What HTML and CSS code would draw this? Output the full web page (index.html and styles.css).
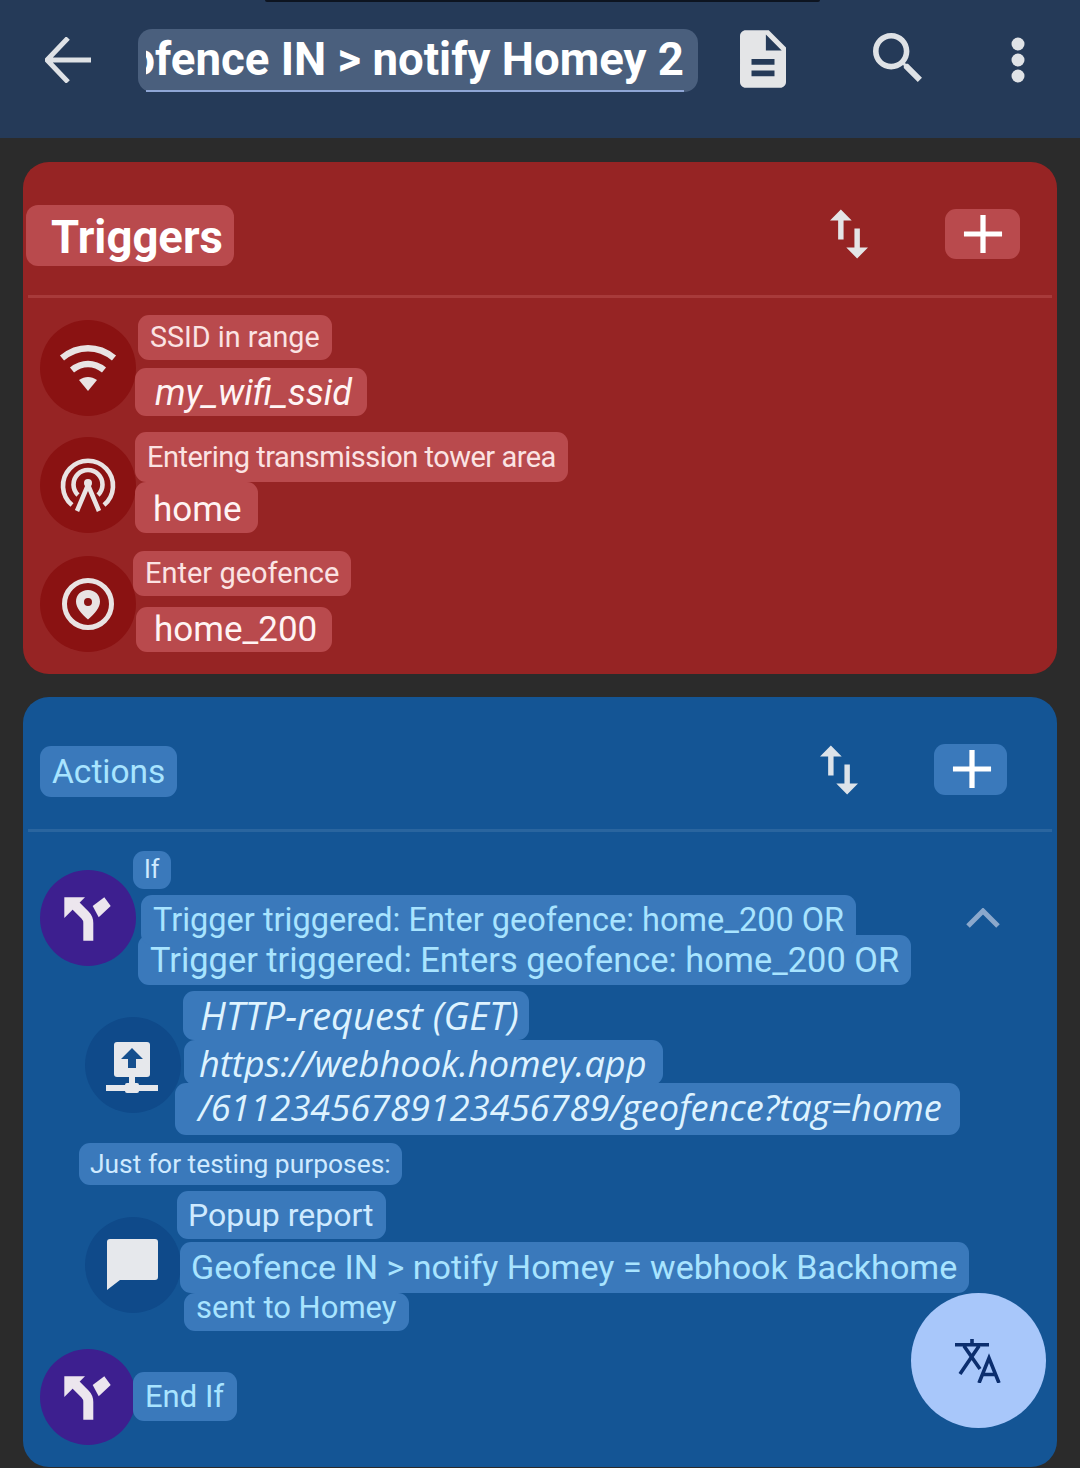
FILE: index.html
```html
<!DOCTYPE html>
<html lang="en">
<head>
<meta charset="utf-8">
<title>Geofence IN > notify Homey 2</title>
<link rel="stylesheet" href="styles.css">
</head>
<body>
<div class="notch"></div>
<header class="topbar">
  <svg class="back" viewBox="0 0 46 46"><path d="M23 1 2 23l21 22M2 23h44" fill="none" stroke="#dfe2e6" stroke-width="5"/></svg>
  <div class="title-chip"><div class="title-clip"><span class="title-text">Geofence IN &gt; notify Homey 2</span></div></div>
  <svg class="ico-doc" viewBox="4 2 16 20"><path fill="#e4e5e7" d="M14 2H6c-1.1 0-1.99.9-1.99 2L4 20c0 1.1.89 2 1.99 2H18c1.1 0 2-.9 2-2V8l-6-6zm2 16H8v-2h8v2zm0-4H8v-2h8v2zm-3-5V3.5L18.5 9H13z"/></svg>
  <svg class="ico-search" viewBox="3 3 17.5 17.5"><path fill="#dfe2e6" d="M15.5 14h-.79l-.28-.27C15.41 12.59 16 11.11 16 9.5 16 5.91 13.09 3 9.5 3S3 5.91 3 9.5 5.91 16 9.5 16c1.61 0 3.09-.59 4.23-1.57l.27.28v.79l5 4.99L20.49 19l-4.99-5zm-6 0C7.01 14 5 11.99 5 9.5S7.01 5 9.5 5 14 7.01 14 9.5 11.99 14 9.5 14z"/></svg>
  <svg class="ico-more" viewBox="0 0 14 46"><circle cx="7" cy="7" r="6.5" fill="#dfe2e6"/><circle cx="7" cy="23" r="6.5" fill="#dfe2e6"/><circle cx="7" cy="39" r="6.5" fill="#dfe2e6"/></svg>
</header>

<main class="content">
  <section class="card card-red">
    <div class="card-head head-red">
      <div class="chip chip-triggers">Triggers</div>
      <svg class="ico-swap" viewBox="5 3 14 18"><path fill="#e4e5e7" d="M16 17.01V10h-2v7.01h-3L15 21l4-3.99h-3zM9 3L5 6.99h3V14h2V6.99h3L9 3z"/></svg>
      <div class="add-btn"><svg viewBox="0 0 42 42"><path d="M21 1v40M1 21h40" stroke="#fff" stroke-width="5.5"/></svg></div>
    </div>
    <div class="divider"></div>
    <div class="rows rows-red">
      <div class="row">
        <div class="circle"><svg viewBox="0 0 96 96"><path d="M22 38c16-13 36-13 52 0" fill="none" stroke="#e9e3e3" stroke-width="6.5"/><path d="M32 50c10-8 22-8 32 0" fill="none" stroke="#e9e3e3" stroke-width="6.5"/><path d="M39 60c6-4 12-4 18 0L48 71z" fill="#e9e3e3"/></svg></div>
        <div class="stack">
          <div class="chip label ssid">SSID in range</div>
          <div class="chip value wifi"><em>my_wifi_ssid</em></div>
        </div>
      </div>
      <div class="row">
        <div class="circle"><svg viewBox="0 0 96 96" fill="none" stroke="#e9e3e3" stroke-width="4.6"><path d="M32 68a25 25 0 1 1 32 0"/><path d="M38 58a14.500 14.500 0 1 1 20 0"/><circle cx="48" cy="46" r="4" fill="#e9e3e3" stroke="none"/><path d="M48 48 37 74M48 48l11 26"/></svg></div>
        <div class="stack">
          <div class="chip label tower">Entering transmission tower area</div>
          <div class="chip value home">home</div>
        </div>
      </div>
      <div class="row">
        <div class="circle"><svg viewBox="0 0 96 96"><circle cx="48" cy="48" r="23.500" fill="none" stroke="#e9e3e3" stroke-width="5"/><path fill-rule="evenodd" fill="#e9e3e3" d="M48 34c-7 0-12 5-12 11.500 0 6 5 12 12 18 7-6 12-12 12-18C60 39 55 34 48 34zm0 8a4 4 0 1 1 0 8 4 4 0 0 1 0-8z"/></svg></div>
        <div class="stack">
          <div class="chip label geo">Enter geofence</div>
          <div class="chip value h200">home_200</div>
        </div>
      </div>
    </div>
  </section>

  <section class="card card-blue">
    <div class="card-head head-blue">
      <div class="chip chip-actions">Actions</div>
      <svg class="ico-swap" viewBox="5 3 14 18"><path fill="#dde3e9" d="M16 17.01V10h-2v7.01h-3L15 21l4-3.99h-3zM9 3L5 6.99h3V14h2V6.99h3L9 3z"/></svg>
      <div class="add-btn"><svg viewBox="0 0 42 42"><path d="M21 1v40M1 21h40" stroke="#fff" stroke-width="5.500"/></svg></div>
    </div>
    <div class="divider"></div>
    <div class="rows rows-blue">
      <div class="row row-if">
        <div class="circle purple"><svg viewBox="0 0 96 96"><path d="M24.300 27.300H45L24.300 48z" fill="#ece6ee"/><path d="M35 35l10 10q3.300 3.300 3.300 8v17.700" fill="none" stroke="#ece6ee" stroke-width="10"/><path d="M52.700 36l11.600-8.700 6.400 8.700-12 11.300z" fill="#ece6ee"/></svg></div>
        <div class="stack">
          <div class="chip small if">If</div>
          <div class="chip blue-text cond cond1">Trigger triggered: Enter geofence: home_200 OR</div>
          <div class="chip blue-text cond cond2">Trigger triggered: Enters geofence: home_200 OR</div>
        </div>
        <svg class="chevron" viewBox="0 0 34 20"><path d="M2 18 17 3l15 15" fill="none" stroke="#8ba8cc" stroke-width="5"/></svg>
      </div>
      <div class="row nested row-http">
        <div class="circle navy"><svg viewBox="0 0 96 96"><rect x="29" y="25" width="36" height="35" rx="3" fill="#e6e8ec"/><path d="M47 31 36 42h7v9h8v-9h7z" fill="#154f8e"/><path d="M47 60v8M21 71h52" stroke="#e6e8ec" stroke-width="6"/><rect x="40" y="66" width="14" height="10" rx="2" fill="#e6e8ec"/></svg></div>
        <div class="stack">
          <div class="chip value italic http"><em>HTTP-request (GET)</em></div>
          <div class="chip value italic url1"><em>https://webhook.homey.app</em></div>
          <div class="chip value italic url2"><em>/61123456789123456789/geofence?tag=home</em></div>
        </div>
      </div>
      <div class="chip comment">Just for testing purposes:</div>
      <div class="row nested row-popup">
        <div class="circle navy"><svg viewBox="0 0 96 96"><path d="M25 22h45q3 0 3 3v35q0 3-3 3H35L22 73V25q0-3 3-3z" fill="#e6e8ec"/></svg></div>
        <div class="stack">
          <div class="chip popup">Popup report</div>
          <div class="chip blue-text msg1">Geofence IN &gt; notify Homey = webhook Backhome</div>
          <div class="chip blue-text msg2">sent to Homey</div>
        </div>
      </div>
      <div class="row row-end">
        <div class="circle purple"><svg viewBox="0 0 96 96"><path d="M24.300 27.300H45L24.300 48z" fill="#ece6ee"/><path d="M35 35l10 10q3.300 3.300 3.300 8v17.700" fill="none" stroke="#ece6ee" stroke-width="10"/><path d="M52.700 36l11.600-8.700 6.400 8.700-12 11.300z" fill="#ece6ee"/></svg></div>
        <div class="chip blue-text endif">End If</div>
      </div>
    </div>
  </section>
</main>

<button class="fab" aria-label="Translate"><svg viewBox="0 0 48 44" fill="none" stroke="#0b2e6e" stroke-width="3.600"><path d="M0 5.700h34M17 0v6M9 7l16 23M24 7 5 35"/><path d="M24 44 34 19l10 25M27.500 35.500h13"/></svg></button>
</body>
</html>
```
FILE: styles.css
```css
* { box-sizing: border-box; }
html, body { margin: 0; padding: 0; }
body {
  width: 1080px;
  height: 1468px;
  overflow: hidden;
  position: relative;
  background: #2b2b2b;
  font-family: Roboto, "Noto Sans", sans-serif;
}
.notch {
  position: absolute;
  top: 0;
  left: 265px;
  width: 555px;
  height: 2px;
  background: #0d1420;
  border-radius: 0 0 4px 4px;
}
.topbar {
  height: 138px;
  background: #253a58;
  display: flex;
  align-items: flex-start;
}
.back { width: 46px; height: 46px; margin: 37px 0 0 45px; flex: none; }
.title-chip {
  width: 560px;
  height: 63px;
  margin: 29px 0 0 47px;
  background: #4a5f7d;
  border-radius: 14px;
  padding: 0 14px 0 8px;
  flex: none;
}
.title-clip {
  height: 63px;
  display: flex;
  justify-content: flex-end;
  overflow: hidden;
  border-bottom: 2px solid #8fa6d6;
}
.title-text {
  font-family: Roboto, sans-serif;
  font-weight: 700;
  font-size: 45.6px;
  line-height: 61px;
  color: #fff;
  white-space: nowrap;
  flex: none;
}
.ico-doc { width: 46px; height: 58px; margin: 30px 0 0 42px; flex: none; }
.ico-search { width: 49px; height: 49px; margin: 33px 0 0 87px; flex: none; }
.ico-more { width: 14px; height: 46px; margin: 37px 0 0 89px; flex: none; }

.content { padding: 24px 23px 0; display: flex; flex-direction: column; gap: 23px; }
.card { border-radius: 26px; }
.card-red { background: #962424; height: 512px; --chip: #b94a4d; --line: #a83a3a; }
.card-blue { background: #145595; height: 770px; --chip: #3a79bb; --line: #2a659f; }

.card-head { display: flex; align-items: center; position: relative; }
.head-red { height: 61px; padding: 0 37px 0 3px; }
.card-red .card-head { top: 43px; }
.card-red .divider { margin-top: 72px; }
.head-blue { height: 52px; padding: 0 50px 0 17px; }
.card-blue .card-head { top: 48px; }
.card-blue .divider { margin-top: 80px; }

.divider { height: 3px; background: var(--line); margin: 0 5px; }
.ico-swap { width: 38px; height: 52px; margin: 0 0 3px auto; flex: none; }
.add-btn {
  width: 75px;
  height: 50px;
  margin: 0 0 4px 77px;
  border-radius: 11px;
  background: var(--chip);
  display: flex;
  align-items: center;
  justify-content: center;
  flex: none;
}
.head-blue .add-btn { margin-left: 76px; width: 73px; height: 51px; padding-left: 3px; }
.add-btn svg { width: 40px; height: 40px; }

.chip {
  background: var(--chip);
  border-radius: 11px;
  width: fit-content;
  white-space: nowrap;
  color: #fbe3e3;
}
.chip-triggers { font-size: 45.5px; font-weight: 700; color: #fff; line-height: 57px; padding: 4px 10px 0 25px; border-radius: 12px; width: 208px; }
.chip-actions { font-size: 33.5px; color: #a8e4ff; line-height: 51px; padding: 0 12px; }

.rows { padding-left: 17px; display: flex; flex-direction: column; }
.rows-red { padding-top: 17px; }
.row { display: flex; align-items: flex-end; }
.rows-red .row + .row { margin-top: 16px; }
.rows-red .row:last-child { margin-top: 18px; }
.circle { width: 96px; height: 96px; border-radius: 50%; background: #8a1212; flex: none; }
.circle svg { display: block; width: 96px; height: 96px; }
.circle.purple { background: #3d1f8f; }
.circle.navy { background: #0f4a8a; }
.stack { display: flex; flex-direction: column; align-items: flex-start; }

.label { font-size: 29px; line-height: 45px; padding: 0 12px; }
.value { font-size: 35px; line-height: 51px; padding: 0 16px 0 18px; color: #fff4f4; }
.ssid { margin-left: 2px; margin-bottom: 8px; font-size: 28.7px; }
.wifi { margin-left: -1px; font-size: 36px; line-height: 46px; padding: 2px 15px 0 20px; }
.tower { margin-left: -1px; line-height: 50px; letter-spacing: -0.5px; }
.home { margin-left: -1px; line-height: 47px; padding-top: 4px; }
.geo { margin-left: -3px; margin-bottom: 11px; }
.h200 { line-height: 45px; padding-right: 15px; }

.rows-blue { padding-top: 19px; }
.rows-blue .chip { color: #cfeaff; }
.rows-blue .chip.blue-text { color: #a8e4ff; }
.rows-blue .chip.value { color: #def3ff; }
.row-if .circle { margin-bottom: 19px; }
.small { font-size: 25px; line-height: 38px; padding: 0 11px; }
.if { margin-left: -3px; margin-bottom: 6px; }
.cond { line-height: 50px; padding: 0 12px; }
.cond1 { margin-left: 5px; margin-bottom: -10px; font-size: 32.5px; position: relative; z-index: 1; }
.cond2 { margin-left: 2px; font-size: 34.4px; }
.chevron { width: 34px; height: 20px; margin: 0 0 57px 55px; flex: none; }

.nested { padding-left: 45px; }
.row-http { margin-top: 6px; align-items: center; }
.row-http .circle { margin-top: 4px; }
.italic { font-family: "Open Sans", sans-serif; font-size: 36.2px; }
.http { margin-left: 2px; line-height: 49px; font-size: 38px; padding: 0 10px 0 17px; }
.url1 { margin-left: 3px; line-height: 43px; padding: 2px 16px 0 15px; }
.url2 { margin-left: -6px; line-height: 48px; padding: 0 18px 4px 23px; margin-top: -2px; }

.comment { margin: 8px 0 0 39px; font-size: 26.4px; line-height: 42px; padding: 0 11px; }
.row-popup { margin-top: 6px; align-items: center; }
.row-popup .circle { margin-top: 8px; }
.popup { font-size: 32px; line-height: 48px; padding: 0 12px 0 11px; margin-left: -4px; margin-bottom: 3px; }
.msg1 { font-size: 34.1px; line-height: 51px; padding: 0 12px 0 11px; margin-left: -1px; }
.msg2 { font-size: 31px; line-height: 30px; padding: 0 12px 8px; margin-left: 3px; }
.row-end { margin-top: 18px; align-items: center; }
.endif { font-size: 31px; line-height: 49px; padding: 0 13px 0 12px; margin: 0 0 2px -3px; }

.fab {
  position: absolute;
  left: 911px;
  top: 1293px;
  width: 135px;
  height: 135px;
  border: none;
  border-radius: 50%;
  background: #a8c7fa;
  display: flex;
  align-items: center;
  justify-content: center;
  padding: 0;
}
.fab svg { width: 48px; height: 44px; }
```
